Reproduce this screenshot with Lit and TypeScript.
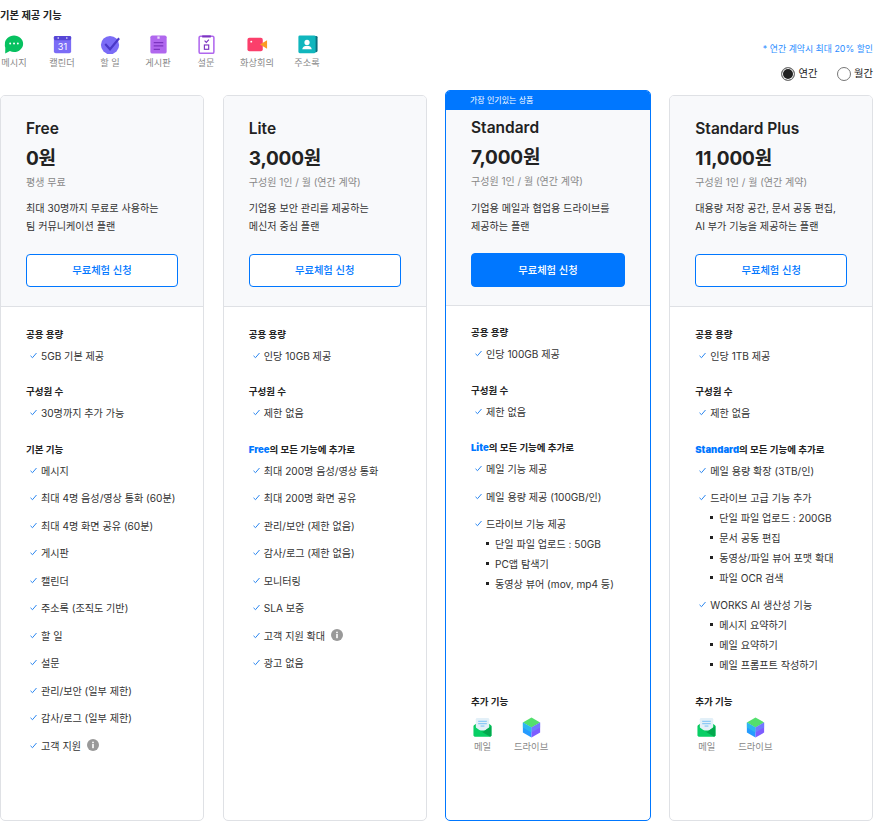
import { LitElement, html, css, svg } from "lit";
import { customElement } from "lit/decorators.js";

type Item = { t: string; info?: boolean; subs?: string[] };
type Group = { title: string; lead?: string; items: Item[] };
type Plan = {
	name: string;
	price: string;
	term: string;
	desc: string[];
	groups: Group[];
	extras?: boolean;
	featured?: boolean;
};

const plain = (...list: string[]): Item[] => list.map((t) => ({ t }));

const PLANS: Plan[] = [
	{
		name: "Free",
		price: "0원",
		term: "평생 무료",
		desc: ["최대 30명까지 무료로 사용하는", "팀 커뮤니케이션 플랜"],
		groups: [
			{ title: "공용 용량", items: plain("5GB 기본 제공") },
			{ title: "구성원 수", items: plain("30명까지 추가 가능") },
			{
				title: "기본 기능",
				items: [
					...plain(
						"메시지",
						"최대 4명 음성/영상 통화 (60분)",
						"최대 4명 화면 공유 (60분)",
						"게시판",
						"캘린더",
						"주소록 (조직도 기반)",
						"할 일",
						"설문",
						"관리/보안 (일부 제한)",
						"감사/로그 (일부 제한)",
					),
					{ t: "고객 지원", info: true },
				],
			},
		],
	},
	{
		name: "Lite",
		price: "3,000원",
		term: "구성원 1인 / 월 (연간 계약)",
		desc: ["기업용 보안 관리를 제공하는", "메신저 중심 플랜"],
		groups: [
			{ title: "공용 용량", items: plain("인당 10GB 제공") },
			{ title: "구성원 수", items: plain("제한 없음") },
			{
				title: "의 모든 기능에 추가로",
				lead: "Free",
				items: [
					...plain(
						"최대 200명 음성/영상 통화",
						"최대 200명 화면 공유",
						"관리/보안 (제한 없음)",
						"감사/로그 (제한 없음)",
						"모니터링",
						"SLA 보증",
					),
					{ t: "고객 지원 확대", info: true },
					{ t: "광고 없음" },
				],
			},
		],
	},
	{
		name: "Standard",
		price: "7,000원",
		term: "구성원 1인 / 월 (연간 계약)",
		desc: ["기업용 메일과 협업용 드라이브를", "제공하는 플랜"],
		featured: true,
		extras: true,
		groups: [
			{ title: "공용 용량", items: plain("인당 100GB 제공") },
			{ title: "구성원 수", items: plain("제한 없음") },
			{
				title: "의 모든 기능에 추가로",
				lead: "Lite",
				items: [
					{ t: "메일 기능 제공" },
					{ t: "메일 용량 제공 (100GB/인)" },
					{
						t: "드라이브 기능 제공",
						subs: ["단일 파일 업로드 : 50GB", "PC앱 탐색기", "동영상 뷰어 (mov, mp4 등)"],
					},
				],
			},
		],
	},
	{
		name: "Standard Plus",
		price: "11,000원",
		term: "구성원 1인 / 월 (연간 계약)",
		desc: ["대용량 저장 공간, 문서 공동 편집,", "AI 부가 기능을 제공하는 플랜"],
		extras: true,
		groups: [
			{ title: "공용 용량", items: plain("인당 1TB 제공") },
			{ title: "구성원 수", items: plain("제한 없음") },
			{
				title: "의 모든 기능에 추가로",
				lead: "Standard",
				items: [
					{ t: "메일 용량 확장 (3TB/인)" },
					{
						t: "드라이브 고급 기능 추가",
						subs: ["단일 파일 업로드 : 200GB", "문서 공동 편집", "동영상/파일 뷰어 포맷 확대", "파일 OCR 검색"],
					},
					{
						t: "WORKS AI 생산성 기능",
						subs: ["메시지 요약하기", "메일 요약하기", "메일 프롬프트 작성하기"],
					},
				],
			},
		],
	},
];

// 24x24 app icons
const ICONS: Record<string, unknown> = {
	message: svg`<path d="M11.500 2.500c5.300 0 9.500 3.900 9.500 8.600s-4.200 8.700-9.500 8.700c-1.500 0-3-.3-4.300-.9L2.300 21.500l.1-6.200a8.300 8.300 0 0 1-.4-4.200C2 6.400 6.200 2.500 11.500 2.500z" fill="#07c160"/><circle cx="7.500" cy="11" r="1" fill="#fff"/><circle cx="11.500" cy="11" r="1" fill="#fff"/><circle cx="15.500" cy="11" r="1" fill="#fff"/>`,
	calendar: svg`<rect x="3" y="3" width="18" height="18" rx="2" fill="#7b6cf6"/><rect x="3" y="3" width="18" height="4.500" rx="1.500" fill="#5646d6"/><circle cx="7.500" cy="5.200" r=".8" fill="#fff"/><circle cx="16.500" cy="5.200" r=".8" fill="#fff"/><text x="12" y="17.800" font-size="9.500" text-anchor="middle" fill="#fff" font-family="Inter, sans-serif">31</text>`,
	todo: svg`<circle cx="11.500" cy="12.500" r="9.500" fill="#7b6cf6"/><path d="M6.500 11.500l5 5.500 9.500-11.500" fill="none" stroke="#4a38c8" stroke-width="2.200"/>`,
	board: svg`<rect x="3.500" y="2.500" width="17" height="19" rx="2" fill="#b067ee"/><rect x="10.800" y="3.600" width="2.400" height="2.400" fill="#ecd9fc"/><path d="M7 10h10M7 13.500h10M7 17h6.500" stroke="#7c34c0" stroke-width="1.300"/>`,
	survey: svg`<rect x="4.300" y="3.300" width="15.400" height="17.900" rx="1.500" fill="#fff" stroke="#b067ee" stroke-width="1.600"/><rect x="7.500" y="2.500" width="9" height="2.200" fill="#7c34c0"/><path d="M10 8l1.800 1.800L14.500 7" fill="none" stroke="#7c34c0" stroke-width="1.200"/><rect x="9.800" y="12.500" width="4.500" height="4.500" fill="none" stroke="#7c34c0" stroke-width="1.200"/>`,
	video: svg`<rect x="1.500" y="5" width="16" height="14" rx="2" fill="#fb3f6b"/><path d="M14.500 12L22 7.500v9z" fill="#fb9a24"/><circle cx="5.500" cy="9" r="1" fill="#fff"/>`,
	contacts: svg`<rect x="5" y="3" width="17.500" height="17" rx="1.500" fill="#0b6f7d"/><rect x="2.500" y="2.500" width="18" height="18.500" rx="1.500" fill="#10b6bd"/><circle cx="11.500" cy="9.800" r="2.700" fill="#fff"/><path d="M6.500 17c.4-2.800 2.500-3.800 5-3.800s4.600 1 5 3.800z" fill="#fff"/>`,
	mail: svg`<path d="M2.800 10L12 3l9.200 7v10a1.500 1.500 0 0 1-1.500 1.500H4.300A1.500 1.500 0 0 1 2.800 20z" fill="#03c75a"/><rect x="5" y="2" width="14" height="13" rx="1.500" fill="#e3f0f8"/><path d="M7.500 5.500h9M7.500 8h9" stroke="#8ec9f5" stroke-width="1.300"/><path d="M10 10.500h4" stroke="#8ec9f5" stroke-width="1.300"/><path d="M2.800 10.500L12 17l9.200-6.500V20a1.500 1.500 0 0 1-1.500 1.500H4.300A1.500 1.500 0 0 1 2.800 20z" fill="#08cf65"/><path d="M12 17l9.200-6.500V20a1.500 1.500 0 0 1-1.500 1.500z" fill="#02a84d"/>`,
	drive: svg`<path d="M12 1.500l9 5.200L12 12 3 6.700z" fill="#53e06d"/><path d="M3 6.700L12 12v10.500l-9-5.200z" fill="#259bff"/><path d="M21 6.700L12 12v10.500l9-5.200z" fill="#7d5dff"/><path d="M12 12l4.500-2.700L21 6.700v5.300l-9 5.200z" fill="#6a8cff" opacity=".6"/><path d="M12 12L3 6.700V12l9 5.200z" fill="#2fc3e8" opacity=".7"/>`,
};

const BASICS = [
	["message", "메시지"],
	["calendar", "캘린더"],
	["todo", "할 일"],
	["board", "게시판"],
	["survey", "설문"],
	["video", "화상회의"],
	["contacts", "주소록"],
];

const icon = (name: string) => html`<svg class="app-ico" viewBox="0 0 24 24">${ICONS[name]}</svg>`;

@customElement("app-root")
export class AppRoot extends LitElement {
	static styles = css`
	:host {
		display: block;
		width: 878px;
		height: 825px;
		overflow: hidden;
		background: #fff;
		color: #222;
		font-family: Inter, "Noto Sans CJK KR", sans-serif;
		font-size: 11px;
		box-sizing: border-box;
		padding-top: 8px;
	}

	.top {
		display: flex;
		justify-content: space-between;
		height: 80px;
		padding-right: 5px;
	}

	h4 {
		margin: 0 0 10.500px;
		font-size: 10.300px;
		line-height: 14px;
		font-weight: 700;
	}

	.basics {
		display: grid;
		grid-template-columns: repeat(5, 48px) 54px 46px;
		margin-left: -10px;
	}

	.basic {
		display: flex;
		flex-direction: column;
		align-items: center;
		gap: 0.500px;
		color: #888;
		font-size: 9.200px;
		line-height: 14px;
		white-space: nowrap;
	}

	.app-ico {
		width: 23px;
		height: 23px;
		display: block;
	}

	.period {
		display: flex;
		flex-direction: column;
		align-items: flex-end;
		padding-top: 34px;
	}

	.note {
		color: #2a8cff;
		font-size: 8.900px;
		line-height: 14px;
	}

	.radios {
		display: flex;
		gap: 19px;
		margin-top: 11px;
		font-size: 10.300px;
		line-height: 12px;
	}

	.radio {
		display: flex;
		align-items: flex-start;
		gap: 3.500px;
	}

	.dot {
		width: 12px;
		height: 12px;
		border: 1.500px solid #777;
		border-radius: 50%;
		background: #fff;
		box-sizing: content-box;
	}

	.dot.on {
		background: #222;
		box-shadow: inset 0 0 0 1px #fff;
	}

	.plans {
		display: grid;
		grid-template-columns: 204.500px 204px 206px 204px;
		column-gap: 18.250px;
		margin-top: 7px;
		align-items: start;
	}

	.card {
		box-sizing: border-box;
		height: 726px;
		border: 1px solid #dfe1e5;
		border-radius: 5px;
		overflow: hidden;
		display: flex;
		flex-direction: column;
		background: #fff;
	}

	.card:first-child {
		margin-right: 0.500px;
	}

	.card.featured {
		height: 731px;
		margin-top: -5px;
		border-color: #0077ff;
	}

	.badge {
		height: 20px;
		margin: -1px -1px 0;
		padding-left: 25px;
		background: #0077ff;
		color: #fff;
		font-size: 8px;
		line-height: 21px;
	}

	.head {
		box-sizing: border-box;
		height: 211px;
		padding: 23px 25px 0;
		background: #f8f9fb;
		border-bottom: 1px solid #dfe1e5;
		flex: none;
	}

	.featured .head {
		height: 195.500px;
		padding-top: 8px;
	}

	.name {
		font-size: 15.500px;
		line-height: 20px;
		font-weight: 600;
	}

	.price {
		margin-top: 7px;
		font-size: 19px;
		line-height: 26px;
		font-weight: 700;
		letter-spacing: -0.200px;
	}

	.term {
		margin-top: 2px;
		color: #888;
		font-size: 10px;
		line-height: 16px;
	}

	.desc {
		margin-top: 9px;
		font-size: 10.100px;
		line-height: 18px;
		color: #333;
	}

	.featured .desc {
		margin-top: 10px;
	}

	.cta {
		display: block;
		box-sizing: border-box;
		width: 100%;
		height: 33px;
		margin-top: 19px;
		padding: 0 0 2px;
		border: 1px solid #0077ff;
		border-radius: 4px;
		background: #fff;
		color: #0077ff;
		font: inherit;
		font-size: 10.300px;
		font-weight: 500;
	}

	.featured .cta {
		height: 34px;
		margin-top: 18px;
		background: #0077ff;
		color: #fff;
	}

	.body {
		flex: 1;
		display: flex;
		flex-direction: column;
		padding: 20.500px 25px 0;
	}

	.group {
		margin-bottom: 16px;
	}

	.group h5 {
		margin: 0;
		font-size: 9.500px;
		line-height: 14px;
		font-weight: 700;
	}

	.group h5 b {
		color: #0077ff;
	}

	ul {
		list-style: none;
		margin: 0;
		padding: 0;
	}

	.item {
		display: flex;
		align-items: center;
		gap: 4px;
		padding-left: 4px;
		height: 27.500px;
		font-size: 10.100px;
		color: #333;
		white-space: nowrap;
	}

	.check {
		width: 7px;
		height: 7px;
		flex: none;
	}

	.info {
		width: 12px;
		height: 12px;
		margin-left: 2px;
	}

	.subs {
		margin: -4px 0 3.500px;
	}

	.subs li {
		display: flex;
		align-items: center;
		height: 20px;
		padding-left: 15px;
		gap: 6px;
		font-size: 10.100px;
		color: #333;
		white-space: nowrap;
	}

	.subs li::before {
		content: "";
		width: 3px;
		height: 3px;
		background: #222;
	}

	.extras {
		margin-top: auto;
		padding-bottom: 66px;
	}

	.extras h5 {
		margin: 0 0 7px;
		font-size: 9.500px;
		line-height: 14px;
		font-weight: 700;
	}

	.extra-row {
		display: flex;
		gap: 20px;
	}

	.extra {
		display: flex;
		flex-direction: column;
		align-items: center;
		gap: 1.500px;
		min-width: 22px;
		color: #888;
		font-size: 9.300px;
		line-height: 14px;
	}
	`;

	private check() {
		return html`<svg class="check" viewBox="0 0 7 7"><path d="M.5 3.800L2.500 5.700 6.500 1" fill="none" stroke="#2a86f0" stroke-width="1"/></svg>`;
	}

	private info() {
		return html`<svg class="info" viewBox="0 0 12 12"><circle cx="6" cy="6" r="6" fill="#999"/><rect x="5.200" y="5" width="1.600" height="4.200" fill="#fff"/><rect x="5.200" y="2.700" width="1.600" height="1.500" fill="#fff"/></svg>`;
	}

	private renderGroup(g: Group) {
		return html`
			<div class="group">
				<h5>${g.lead ? html`<b>${g.lead}</b>` : ""}${g.title}</h5>
				<ul>
					${g.items.map(
						(it) => html`
							<li class="item">${this.check()}<span>${it.t}</span>${it.info ? this.info() : ""}</li>
							${it.subs ? html`<ul class="subs">${it.subs.map((s) => html`<li>${s}</li>`)}</ul>` : ""}
						`,
					)}
				</ul>
			</div>
		`;
	}

	private renderPlan(p: Plan) {
		return html`
			<section class="card ${p.featured ? "featured" : ""}">
				${p.featured ? html`<div class="badge">가장 인기있는 상품</div>` : ""}
				<div class="head">
					<div class="name">${p.name}</div>
					<div class="price">${p.price}</div>
					<div class="term">${p.term}</div>
					<div class="desc">${p.desc.map((d) => html`<div>${d}</div>`)}</div>
					<button class="cta">무료체험 신청</button>
				</div>
				<div class="body">
					${p.groups.map((g) => this.renderGroup(g))}
					${p.extras
						? html`<div class="extras">
								<h5>추가 기능</h5>
								<div class="extra-row">
									<div class="extra">${icon("mail")}<span>메일</span></div>
									<div class="extra">${icon("drive")}<span>드라이브</span></div>
								</div>
							</div>`
						: ""}
				</div>
			</section>
		`;
	}

	render() {
		return html`
			<div class="top">
				<div>
					<h4>기본 제공 기능</h4>
					<div class="basics">
						${BASICS.map(([k, label]) => html`<div class="basic">${icon(k)}<span>${label}</span></div>`)}
					</div>
				</div>
				<div class="period">
					<div class="note">* 연간 계약시 최대 20% 할인</div>
					<div class="radios">
						<label class="radio"><span class="dot on"></span>연간</label>
						<label class="radio"><span class="dot"></span>월간</label>
					</div>
				</div>
			</div>
			<div class="plans">${PLANS.map((p) => this.renderPlan(p))}</div>
		`;
	}
}
